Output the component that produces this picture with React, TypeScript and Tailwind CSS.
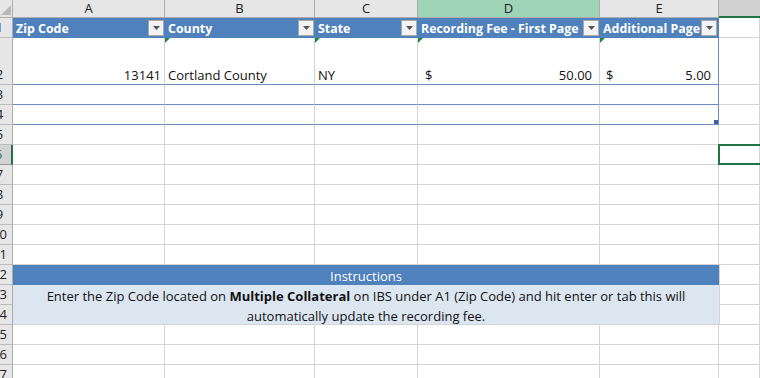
import React from 'react';

const font = "font-['Open_Sans',sans-serif]";
const grid = 'border-r border-b border-[#d4d4d4]';

function RowHead({ n, h = 'h-[20px]', active = false }: { n: number; h?: string; active?: boolean }) {
  return (
    <div
      className={`${h} w-[13px] shrink-0 flex justify-end items-end overflow-hidden border-b ${
        active
          ? 'bg-[#d2d2d2] border-b-[#9a9a9a] border-r-2 border-r-[#217346] text-[#217346]'
          : 'bg-[#e6e6e6] border-b-[#bcbcbc] border-r border-r-[#ababab] text-[#222]'
      }`}
    >
      <div className="w-[25px] shrink-0 text-center text-[13px] leading-[19px]">{n}</div>
    </div>
  );
}

function FilterBtn() {
  return (
    <div className="w-[16px] h-[16px] shrink-0 bg-[#f3f3f3] border border-[#a9a9a9] flex items-center justify-center">
      <svg width="7" height="4" viewBox="0 0 7 4">
        <path d="M0 0h7L3.5 4z" fill="#555" />
      </svg>
    </div>
  );
}

function HeadCell({ w, label, last = false }: { w: string; label: string; last?: boolean }) {
  return (
    <div className={`${w} h-[20px] shrink-0 bg-[#4f81bd] flex items-center pl-[3px] pr-[1px] ${last ? 'border-r border-r-[#4f81bd]' : ''}`}>
      <span className="flex-1 overflow-hidden whitespace-nowrap text-white font-bold text-[12.4px] leading-[20px] pt-[1px]">{label}</span>
      <FilterBtn />
    </div>
  );
}

function Tri() {
  return <div className="absolute left-0 top-0 w-0 h-0 border-t-[5px] border-t-[#1f8a3a] border-r-[5px] border-r-transparent" />;
}

const cols = ['w-[152px]', 'w-[150px]', 'w-[103px]', 'w-[182px]', 'w-[119px]'];

function PlainRow({ n, active = false }: { n: number; active?: boolean }) {
  return (
    <div className="flex">
      <RowHead n={n} active={active} />
      {cols.map((c, i) => (
        <div key={i} className={`${c} h-[20px] shrink-0 ${grid}`} />
      ))}
      <div className={`flex-1 h-[20px] ${grid} relative`}>
        {active ? <div className="absolute -left-[1px] -top-[1px] right-[-4px] bottom-[-1px] border-2 border-[#217346]" /> : null}
      </div>
    </div>
  );
}

function TableRow({ n, resize = false }: { n: number; resize?: boolean }) {
  return (
    <div className="flex">
      <RowHead n={n} />
      {cols.map((c, i) => (
        <div
          key={i}
          className={`${c} h-[20px] shrink-0 border-b border-b-[#6d8ec2] border-r ${i === 4 ? 'border-r-[#6d8ec2] relative' : 'border-r-[#d4d4d4]'}`}
        >
          {i === 4 && resize ? <div className="absolute right-0 bottom-0 w-[4px] h-[4px] bg-[#3a5fb0]" /> : null}
        </div>
      ))}
      <div className={`flex-1 h-[20px] ${grid}`} />
    </div>
  );
}

const dataCell = 'h-[47px] shrink-0 border-r border-b border-b-[#6d8ec2] relative flex items-end pb-[1px] leading-[15px]';

export default function App() {
  return (
    <div className={`${font} w-[760px] h-[378px] overflow-hidden bg-white text-[13px] text-[#111]`}>
      {/* column letters */}
      <div className="flex h-[18px]">
        <div className="w-[13px] shrink-0 bg-[#e6e6e6] border-r border-b border-[#ababab] relative overflow-hidden">
          <div className="absolute right-[1px] bottom-[2px] w-0 h-0 border-b-[10px] border-b-[#b9b9b9] border-l-[10px] border-l-transparent" />
        </div>
        {['A', 'B', 'C', 'D', 'E'].map((l, i) => (
          <div
            key={l}
            className={`${cols[i]} shrink-0 flex items-center justify-center text-[13px] text-[#222] border-r border-r-[#ababab] border-b border-b-[#ababab] ${
              l === 'D' ? 'bg-[#9fd5b7]' : 'bg-[#e6e6e6]'
            }`}
          >
            {l}
          </div>
        ))}
        <div className="flex-1 bg-[#d2d2d2] border-b-2 border-b-[#217346]" />
      </div>

      {/* row 1 - table header */}
      <div className="flex">
        <RowHead n={1} />
        <HeadCell w={cols[0]} label="Zip Code" />
        <HeadCell w={cols[1]} label="County" />
        <HeadCell w={cols[2]} label="State" />
        <HeadCell w={cols[3]} label="Recording Fee - First Page" />
        <HeadCell w={cols[4]} label="Additional Page" last />
        <div className={`flex-1 h-[20px] ${grid}`} />
      </div>

      {/* row 2 - data */}
      <div className="flex">
        <RowHead n={2} h="h-[47px]" />
        <div className={`${cols[0]} ${dataCell} border-r-[#d4d4d4] justify-end pr-[3px]`}>13141</div>
        <div className={`${cols[1]} ${dataCell} border-r-[#d4d4d4] pl-[3px]`}>
          <Tri />
          Cortland County
        </div>
        <div className={`${cols[2]} ${dataCell} border-r-[#d4d4d4] pl-[3px]`}>
          <Tri />
          NY
        </div>
        <div className={`${cols[3]} ${dataCell} border-r-[#d4d4d4] justify-between pl-[7px] pr-[7px]`}>
          <Tri />
          <span>$</span>
          <span>50.00</span>
        </div>
        <div className={`${cols[4]} ${dataCell} border-r-[#6d8ec2] justify-between pl-[6px] pr-[7px]`}>
          <Tri />
          <span>$</span>
          <span>5.00</span>
        </div>
        <div className={`flex-1 h-[47px] ${grid}`} />
      </div>

      <TableRow n={3} />
      <TableRow n={4} resize />
      {[5, 6, 7, 8, 9, 10, 11].map((n) => (
        <PlainRow key={n} n={n} active={n === 6} />
      ))}

      {/* row 12 - instructions title */}
      <div className="flex">
        <RowHead n={12} />
        <div className="w-[706px] h-[20px] shrink-0 bg-[#4f81bd] border-b border-b-[#4f81bd] flex items-center justify-center text-white leading-[20px] pt-[2px]">
          Instructions
        </div>
        <div className={`flex-1 h-[20px] ${grid} border-l border-l-[#d4d4d4]`} />
      </div>

      {/* rows 13-14 - instructions body */}
      <div className="flex">
        <div className="flex flex-col">
          <RowHead n={13} />
          <RowHead n={14} />
        </div>
        <div className="w-[706px] h-[40px] shrink-0 bg-[#dce6f1] border-b border-b-[#d4d4d4] flex flex-col items-center justify-center leading-[20px] pt-[2px] text-[#111]">
          <div>
            Enter the Zip Code located on <b>Multiple Collateral</b> on IBS under A1 (Zip Code) and hit enter or tab this will
          </div>
          <div>automatically update the recording fee.</div>
        </div>
        <div className="flex-1 flex flex-col border-l border-l-[#d4d4d4]">
          <div className={`h-[20px] ${grid}`} />
          <div className={`h-[20px] ${grid}`} />
        </div>
      </div>

      {[15, 16, 17].map((n) => (
        <PlainRow key={n} n={n} />
      ))}
    </div>
  );
}
